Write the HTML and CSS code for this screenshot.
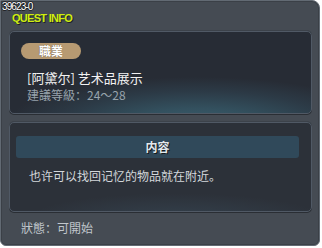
FILE: index.html
```html
<!DOCTYPE html>
<html>
<head>
<meta charset="utf-8">
<link rel="stylesheet" href="styles.css">
</head>
<body>
<div class="window">
  <div class="idtag">39623-0</div>
  <div class="wtitle">QUEST INFO</div>
  <div class="panel panel-top">
    <div class="badge">職業</div>
    <div class="qname">[阿黛尔] 艺术品展示</div>
    <div class="qlevel">建議等級：24～28</div>
  </div>
  <div class="panel panel-body">
    <div class="bar">内容</div>
    <div class="desc">也许可以找回记忆的物品就在附近。</div>
  </div>
  <div class="status">狀態：可開始</div>
</div>
</body>
</html>
```
FILE: styles.css
```css
html, body {
  margin: 0;
  padding: 0;
  background: #ffffff;
}
.window {
  box-sizing: border-box;
  width: 320px;
  height: 246px;
  padding: 0 7px 0 8px;
  background: #454b53;
  border: 1px solid #626a73;
  border-radius: 0 8px 6px 6px;
  box-shadow: inset 0 0 0 1px #3b4047;
  font-family: "Noto Sans CJK SC", "Noto Sans CJK TC", sans-serif;
  overflow: hidden;
}
.idtag {
  margin: 1px 0 0 -7px;
  height: 10px;
  font-family: "Liberation Sans", sans-serif;
  font-size: 10px;
  line-height: 10px;
  letter-spacing: -0.9px;
  color: #ffffff;
  text-shadow: 1px 0 0 #1e2125, -1px 0 0 #1e2125, 0 1px 0 #1e2125, 0 -1px 0 #1e2125;
}
.wtitle {
  margin: 1px 0 0 3px;
  height: 10px;
  font-family: "Liberation Sans", sans-serif;
  font-weight: bold;
  font-size: 11px;
  line-height: 10px;
  letter-spacing: -0.7px;
  color: #cfee10;
  text-shadow: 1px 1px 0 #1e2226;
}
.panel {
  border: 1px solid #505965;
  border-radius: 5px;
  box-shadow: 0 1px 0 #2a2e34, 0 -1px 0 #3c424a;
}
.panel-top {
  margin-top: 8px;
  padding: 11px 11px 10px 11px;
  background:
    radial-gradient(ellipse 75% 70% at 62% 115%, #3d6070 0%, #33505e 30%, #2c3a46 60%, rgba(40,45,54,0) 85%),
    #272c35;
}
.badge {
  width: 60px;
  height: 16px;
  border-radius: 8px;
  background: #b79a72;
  color: #ffffff;
  font-weight: bold;
  font-size: 12px;
  line-height: 16px;
  text-align: center;
  text-shadow: 0 0 1px #5a4530;
}
.qname {
  margin: 11px 0 0 6px;
  font-size: 13px;
  line-height: 16px;
  color: #f2f2f2;
}
.qlevel {
  margin: 1px 0 0 6px;
  font-size: 12px;
  line-height: 16px;
  color: #98a3ac;
}
.panel-body {
  margin-top: 8px;
  padding: 13px 12px 27px 6px;
  background:
    radial-gradient(ellipse 50% 30% at 55% 110%, #34414d 0%, rgba(45,50,59,0) 100%),
    #2c3139;
}
.bar {
  height: 22px;
  border-radius: 3px;
  background: #30495a;
  color: #e2e8ec;
  font-weight: bold;
  font-size: 12px;
  line-height: 22px;
  text-align: center;
  text-shadow: 1px 1px 0 #14181c;
}
.desc {
  margin: 10px 0 0 13px;
  font-size: 12px;
  line-height: 16px;
  color: #d3d7db;
}
.status {
  margin: 8px 0 0 12px;
  font-size: 12px;
  line-height: 16px;
  color: #c0c6cc;
}
```
